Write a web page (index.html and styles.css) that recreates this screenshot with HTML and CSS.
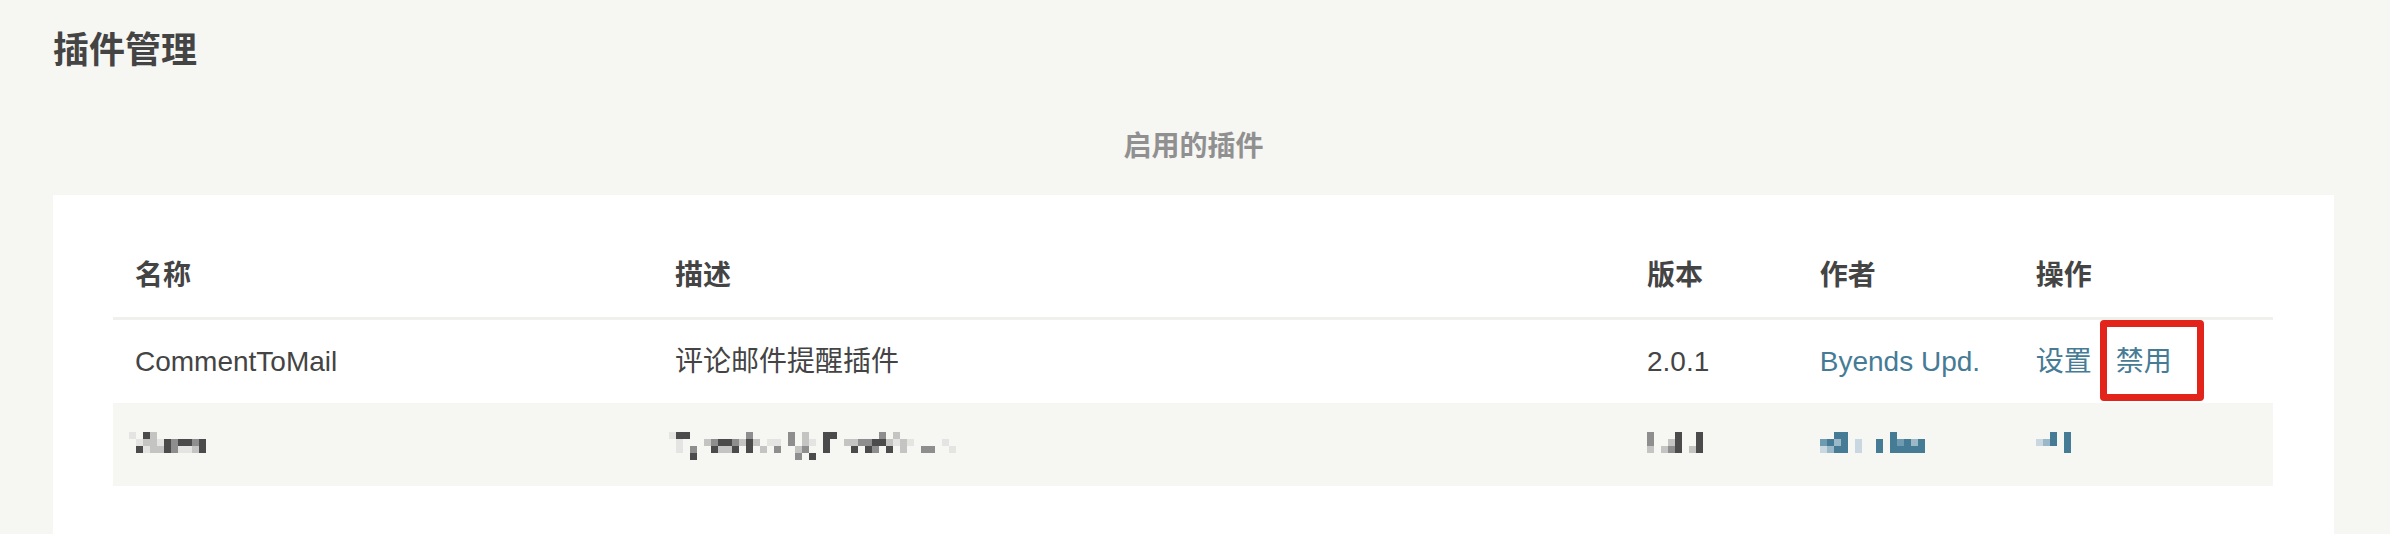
FILE: index.html
```html
<!DOCTYPE html>
<html lang="zh-CN">
  <head>
    <meta charset="UTF-8" />
    <meta name="viewport" content="width=device-width, initial-scale=1.0" />
    <title>插件管理</title>
    <link rel="stylesheet" href="styles.css">
  </head>
  <body>
    <div class="main">
      <h2 class="page-title">插件管理</h2>

      <h4 class="list-title">启用的插件</h4>

      <div class="table-wrap">
        <table class="list-table">
          <colgroup>
            <col class="col-name">
            <col class="col-desc">
            <col class="col-version">
            <col class="col-author">
            <col class="col-action">
          </colgroup>
          <thead>
            <tr>
              <th>名称</th>
              <th>描述</th>
              <th>版本</th>
              <th>作者</th>
              <th>操作</th>
            </tr>
          </thead>
          <tbody>
            <tr>
              <td>CommentToMail</td>
              <td>评论邮件提醒插件</td>
              <td>2.0.1</td>
              <td><a href="#">Byends Upd.</a></td>
              <td><a href="#">设置</a><a href="#" class="mark">禁用</a></td>
            </tr>
            <tr class="even">
              <td><span class="mosaic shift" data-rows="10420000000|01221434434|04122431124"></span></td>
              <td><span class="mosaic shift" data-rows="14400000000300000302004400000030200000000|01000234432420110302104002233442121000010|01030042240402030023004000404304020033001|00040000000000000030400000000000000000000"></span></td>
              <td><span class="mosaic" data-rows="30004004|30024004|20234024"></span></td>
              <td><span class="mosaic blue" data-rows="004400000040000|342401004043424|124401004044444"></span></td>
              <td><span class="mosaic blue" data-rows="00404|12404|00004"></span></td>
            </tr>
          </tbody>
        </table>
      </div>
    </div>

    <script src="script.js"></script>
  </body>
</html>
```

FILE: styles.css
```css
body {
  margin: 0;
  background: #f6f6f3;
  color: #444;
  font-family: "Liberation Sans", "Noto Sans CJK SC", sans-serif;
  overflow: hidden;
}
a {
  color: #467b96;
  text-decoration: none;
}
.main {
  padding: 0 56px 0 53px;
}
.page-title {
  margin: 26px 0 0;
  font-size: 36px;
  line-height: 50px;
  font-weight: bold;
  color: #444;
}
.list-title {
  margin: 50px 0 0;
  text-align: center;
  font-size: 28px;
  line-height: 42px;
  font-weight: bold;
  color: #909090;
}
.table-wrap {
  margin-top: 27px;
  background: #fff;
  padding: 40px 61px 200px 60px;
}
.list-table {
  width: 100%;
  border-collapse: collapse;
  table-layout: fixed;
  font-size: 28px;
}
.col-name {
  width: 25%;
}
.col-desc {
  width: 45%;
}
.col-version {
  width: 8%;
}
.col-author {
  width: 10%;
}
.col-action {
  width: 12%;
}
.list-table th {
  text-align: left;
  font-weight: bold;
  line-height: 42px;
  padding: 20px 22px;
  border-bottom: 3px solid #f0f0ec;
}
.list-table td {
  line-height: 43px;
  padding: 20px 22px;
  white-space: nowrap;
}
.list-table tr.even td {
  background: #f6f6f3;
}
.mark {
  display: inline-block;
  position: relative;
  margin-left: 24px;
}
.mark::after {
  content: "";
  position: absolute;
  top: -20px;
  bottom: -18px;
  left: -16px;
  right: -32px;
  border: 7px solid #e3241b;
  border-radius: 4px;
}

/* pixelated (redacted) text */
.mosaic {
  display: inline-block;
  vertical-align: top;
  height: 43px;
  padding-top: 9px;
  box-sizing: border-box;
}
.mosaic.shift {
  margin-left: -6px;
}
.m-row {
  display: flex;
  height: 7px;
}
.m-cell {
  width: 7px;
  height: 7px;
}
.s1 {
  background: #e4e4e2;
}
.s2 {
  background: #c4c4c2;
}
.s3 {
  background: #8e8e8e;
}
.s4 {
  background: #4b4b4b;
}
.blue .s1 {
  background: #c9d8e0;
}
.blue .s2 {
  background: #9ab8c8;
}
.blue .s3 {
  background: #6e9ab2;
}
.blue .s4 {
  background: #467b96;
}
```

FILE: script.js
```js
const mosaics = document.querySelectorAll(".mosaic");

for (let i = 0; i < mosaics.length; i++) {
  const rows = mosaics[i].dataset.rows.split("|");

  rows.forEach((row) => {
    const line = document.createElement("span");
    line.className = "m-row";

    for (const ch of row) {
      const cell = document.createElement("span");
      cell.className = "m-cell";
      if (ch !== "0") {
        cell.classList.add("s" + ch);
      }
      line.appendChild(cell);
    }

    mosaics[i].appendChild(line);
  });
}
```
